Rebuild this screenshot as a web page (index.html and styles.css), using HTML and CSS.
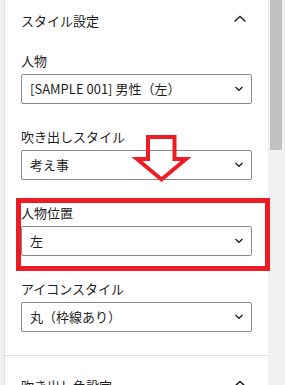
FILE: index.html
```html
<!DOCTYPE html>
<html lang="ja">
<head>
<meta charset="utf-8">
<title>スタイル設定</title>
<link rel="stylesheet" href="styles.css">
</head>
<body>
<div class="frame">
  <div class="gutter"></div>
  <main class="sidebar">
    <section class="panel">
      <div class="panel-title panel-title--top">
        <span class="panel-title-text">スタイル設定</span>
        <svg class="chev-up" viewBox="0 0 24 24" width="24" height="24"><polyline points="6.5,12.5 12,7.5 17.5,12.5" fill="none" stroke="#1e1e1e" stroke-width="1.5"/></svg>
      </div>
      <div class="panel-body">
        <div class="field">
          <div class="field-label">人物</div>
          <div class="select"><span class="select-value">[SAMPLE 001] 男性（左）</span><svg class="chev-down" viewBox="0 0 10 6" width="10" height="6"><polyline points="1.5,1 5,4.3 8.5,1" fill="none" stroke="#1e1e1e" stroke-width="1.3"/></svg></div>
        </div>
        <div class="field">
          <div class="field-label">吹き出しスタイル</div>
          <div class="select"><span class="select-value">考え事</span><svg class="chev-down" viewBox="0 0 10 6" width="10" height="6"><polyline points="1.5,1 5,4.3 8.5,1" fill="none" stroke="#1e1e1e" stroke-width="1.3"/></svg></div>
        </div>
        <div class="field">
          <div class="field-label">人物位置</div>
          <div class="select"><span class="select-value">左</span><svg class="chev-down" viewBox="0 0 10 6" width="10" height="6"><polyline points="1.5,1 5,4.3 8.5,1" fill="none" stroke="#1e1e1e" stroke-width="1.3"/></svg></div>
        </div>
        <div class="field">
          <div class="field-label">アイコンスタイル</div>
          <div class="select"><span class="select-value">丸（枠線あり）</span><svg class="chev-down" viewBox="0 0 10 6" width="10" height="6"><polyline points="1.5,1 5,4.3 8.5,1" fill="none" stroke="#1e1e1e" stroke-width="1.3"/></svg></div>
        </div>
      </div>
    </section>
    <section class="panel panel--divided">
      <div class="panel-title">
        <span class="panel-title-text">吹き出し色設定</span>
        <svg class="chev-up" viewBox="0 0 24 24" width="24" height="24"><polyline points="6.5,12.5 12,7.5 17.5,12.5" fill="none" stroke="#1e1e1e" stroke-width="1.5"/></svg>
      </div>
    </section>
  </main>
  <div class="scrollbar"><div class="scroll-thumb"></div></div>
  <div class="annot-box"></div>
  <svg class="annot-arrow" viewBox="0 0 62 58" width="62" height="58"><polygon points="18,7 44.5,7 44.5,29 56,29 31.5,49.5 7,29 18,29" fill="none" stroke="#ed1c24" stroke-width="4" stroke-linejoin="miter"/></svg>
</div>
</body>
</html>
```
FILE: styles.css
```css
* { box-sizing: border-box; }
html, body { margin: 0; padding: 0; }
body {
  width: 285px;
  height: 385px;
  overflow: hidden;
  background: #fff;
  font-family: "Noto Sans CJK JP", "Noto Sans", sans-serif;
  font-size: 13px;
  color: #1e1e1e;
}
.frame {
  position: relative;
  display: flex;
  height: 385px;
}
.gutter {
  width: 5px;
  flex: none;
  background: #f0f0f0;
  border-right: 1px solid #e0e0e0;
}
.sidebar {
  flex: 1;
  min-width: 0;
  background: #fff;
}
.panel--divided {
  border-top: 1px solid #e0e0e0;
}
.panel-title {
  display: flex;
  align-items: center;
  justify-content: space-between;
  padding: 20px 16px 0 16px;
  height: 40px;
}
.panel-title--top {
  padding-top: 11px;
  height: 31px;
}
.panel-title-text {
  line-height: 20px;
  font-size: 13px;
}
.chev-up { display: block; flex: none; }
.panel-body {
  padding: 21px 16px 23px 16px;
  display: flex;
  flex-direction: column;
  gap: 24px;
}
.field-label {
  line-height: 18px;
  margin-bottom: 4px;
}
.select {
  height: 30px;
  border: 1px solid #8a8a8a;
  border-radius: 2px;
  display: flex;
  align-items: center;
  justify-content: space-between;
  padding: 0 7px 0 8px;
}
.select-value {
  line-height: 20px;
}
.chev-down { display: block; flex: none; }
.scrollbar {
  width: 17px;
  flex: none;
  background: #f1f1f1;
  padding: 0 3px 0 2px;
}
.scroll-thumb {
  height: 150px;
  background: #c1c1c1;
}
.annot-box {
  position: absolute;
  left: 16px;
  top: 198px;
  width: 254px;
  height: 73px;
  border: 5px solid #ed1c24;
}
.annot-arrow {
  position: absolute;
  left: 130px;
  top: 130px;
}
```
